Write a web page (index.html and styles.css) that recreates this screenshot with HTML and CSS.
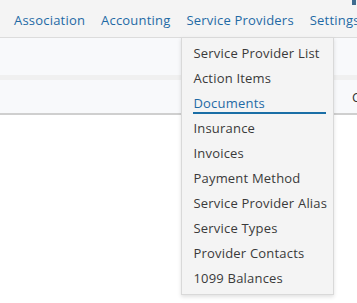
FILE: index.html
```html
<!DOCTYPE html>
<html lang="en">
<head>
    <meta charset="UTF-8">
    <title>Service Providers Menu</title>
    <meta name="viewport" content="width=device-width, initial-scale=1.0">
    <link rel="stylesheet" href="styles.css">
</head>
<body>

    <nav class="topnav">
        <span class="corner-mark"></span>
        <a href="#" class="nav-link">Association</a>
        <a href="#" class="nav-link">Accounting</a>
        <div class="nav-item">
            <a href="#" class="nav-link">Service Providers</a>
            <ul class="dropdown">
                <li><a href="#">Service Provider List</a></li>
                <li><a href="#">Action Items</a></li>
                <li><a href="#" class="active">Documents</a></li>
                <li><a href="#">Insurance</a></li>
                <li><a href="#">Invoices</a></li>
                <li><a href="#">Payment Method</a></li>
                <li><a href="#">Service Provider Alias</a></li>
                <li><a href="#">Service Types</a></li>
                <li><a href="#">Provider Contacts</a></li>
                <li><a href="#">1099 Balances</a></li>
            </ul>
        </div>
        <a href="#" class="nav-link">Settings</a>
    </nav>

    <div class="toolbar"></div>
    <div class="divider"></div>
    <div class="header-row">
        <span class="cut-text">C</span>
    </div>

    <main class="content"></main>

</body>
</html>
```

FILE: styles.css
```css
body {
    font-family: "Open Sans", Arial, sans-serif;
    font-size: 13px;
    letter-spacing: 0.2px;
    margin: 0;
    background-color: #ffffff;
    overflow: hidden;
}
.topnav {
    position: relative;
    display: flex;
    align-items: center;
    gap: 16px;
    height: 34px;
    padding: 3px 0 0 14px;
    background-color: #f4f4f4;
    border-bottom: 1px solid #dcdcdc;
    white-space: nowrap;
}
.corner-mark {
    position: absolute;
    top: 0;
    left: 352px;
    width: 4px;
    height: 5px;
    background-color: #3f6b8f;
}
.nav-link {
    color: #1f6aa5;
    text-decoration: none;
}
.nav-item {
    position: relative;
}
.dropdown {
    position: absolute;
    top: 26px;
    left: -5px;
    z-index: 10;
    width: 133px;
    margin: 0;
    padding: 3px 7px 3px 11px;
    list-style: none;
    background-color: #f4f4f4;
    border: 1px solid #d9d9d9;
    box-shadow: 0 2px 4px rgba(0,0,0,0.12);
}
.dropdown li {
    line-height: 25px;
}
.dropdown a {
    display: block;
    color: #3a3a3a;
    text-decoration: none;
}
.dropdown a.active {
    color: #1f6aa5;
    line-height: 17px;
    padding-top: 4px;
    margin-bottom: 2px;
    border-bottom: 2px solid #1a6ea6;
}
.toolbar {
    height: 37px;
    background-color: #f8f9fb;
}
.divider {
    height: 5px;
    background-color: #f0f0f0;
}
.header-row {
    position: relative;
    height: 33px;
    background-color: #f8f9fb;
    border-bottom: 2px solid #cfcfcf;
}
.cut-text {
    position: absolute;
    left: 352px;
    top: 8px;
    color: #333333;
}
.content {
    height: 200px;
}
```
